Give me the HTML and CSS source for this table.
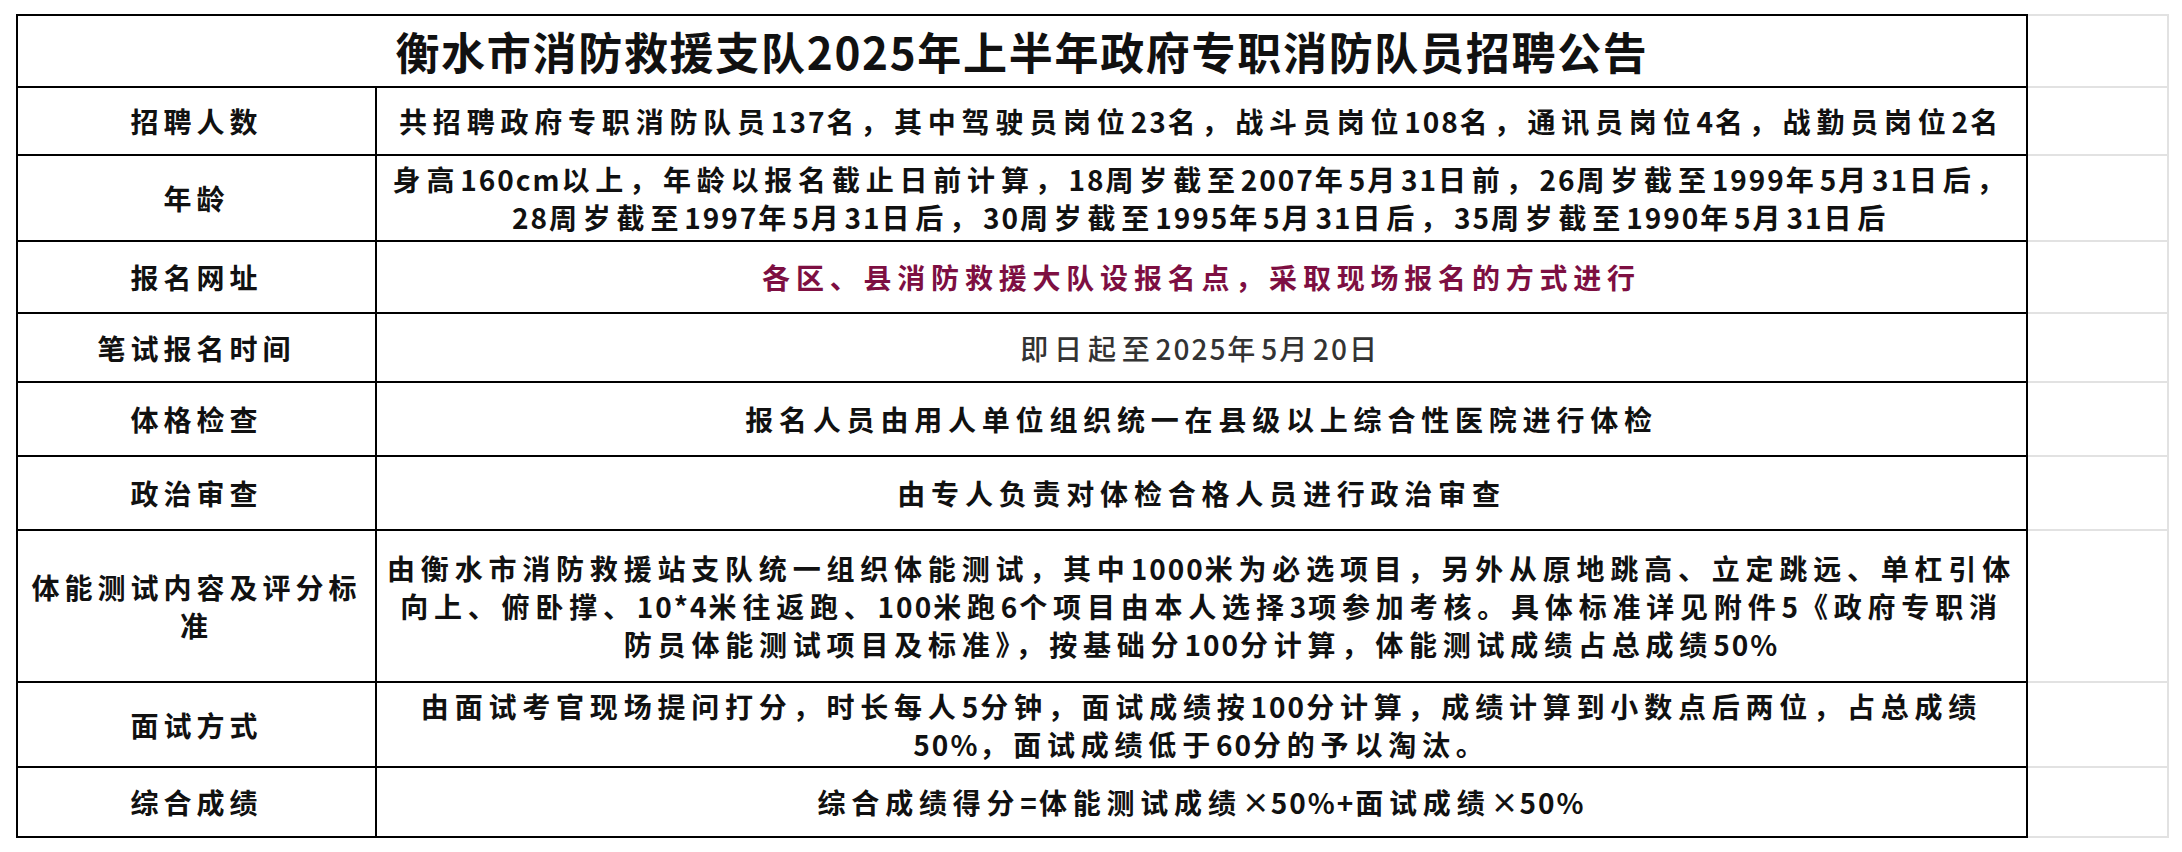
FILE: index.html
```html
<!DOCTYPE html>
<html lang="zh-CN">
<head>
<meta charset="utf-8">
<title>衡水市消防救援支队2025年上半年政府专职消防队员招聘公告</title>
<link rel="stylesheet" href="styles.css">
</head>
<body>
<div class="sheet">
  <div class="grid">
    <div class="cell title"><div class="txt">衡水市消防救援支队2025年上半年政府专职消防队员招聘公告</div></div>
    <div class="ext first"></div>

    <div class="cell label"><div class="txt">招聘人数</div></div>
    <div class="cell content"><div class="txt">共招聘政府专职消防队员<span class="n">137</span>名，其中驾驶员岗位<span class="n">23</span>名，战斗员岗位<span class="n">108</span>名，通讯员岗位<span class="n">4</span>名，战勤员岗位<span class="n">2</span>名</div></div>
    <div class="ext"></div>

    <div class="cell label"><div class="txt">年龄</div></div>
    <div class="cell content"><div class="txt">身高<span class="n">160cm</span>以上，年龄以报名截止日前计算，<span class="n">18</span>周岁截至<span class="n">2007</span>年<span class="n">5</span>月<span class="n">31</span>日前，<span class="n">26</span>周岁截至<span class="n">1999</span>年<span class="n">5</span>月<span class="n">31</span>日后，<br><span class="n">28</span>周岁截至<span class="n">1997</span>年<span class="n">5</span>月<span class="n">31</span>日后，<span class="n">30</span>周岁截至<span class="n">1995</span>年<span class="n">5</span>月<span class="n">31</span>日后，<span class="n">35</span>周岁截至<span class="n">1990</span>年<span class="n">5</span>月<span class="n">31</span>日后</div></div>
    <div class="ext"></div>

    <div class="cell label"><div class="txt">报名网址</div></div>
    <div class="cell content maroon"><div class="txt">各区、县消防救援大队设报名点，采取现场报名的方式进行</div></div>
    <div class="ext"></div>

    <div class="cell label"><div class="txt">笔试报名时间</div></div>
    <div class="cell content muted"><div class="txt">即日起至<span class="n">2025</span>年<span class="n">5</span>月<span class="n">20</span>日</div></div>
    <div class="ext"></div>

    <div class="cell label"><div class="txt">体格检查</div></div>
    <div class="cell content"><div class="txt">报名人员由用人单位组织统一在县级以上综合性医院进行体检</div></div>
    <div class="ext"></div>

    <div class="cell label"><div class="txt">政治审查</div></div>
    <div class="cell content"><div class="txt">由专人负责对体检合格人员进行政治审查</div></div>
    <div class="ext"></div>

    <div class="cell label"><div class="txt">体能测试内容及评分标<br>准</div></div>
    <div class="cell content"><div class="txt">由衡水市消防救援站支队统一组织体能测试，其中<span class="n">1000</span>米为必选项目，另外从原地跳高、立定跳远、单杠引体<br>向上、俯卧撑、<span class="n">10*4</span>米往返跑、<span class="n">100</span>米跑<span class="n">6</span>个项目由本人选择<span class="n">3</span>项参加考核。具体标准详见附件<span class="n">5</span>《政府专职消<br>防员体能测试项目及标准》，按基础分<span class="n">100</span>分计算，体能测试成绩占总成绩<span class="n">50%</span></div></div>
    <div class="ext"></div>

    <div class="cell label"><div class="txt">面试方式</div></div>
    <div class="cell content"><div class="txt">由面试考官现场提问打分，时长每人<span class="n">5</span>分钟，面试成绩按<span class="n">100</span>分计算，成绩计算到小数点后两位，占总成绩<br><span class="n">50%</span>，面试成绩低于<span class="n">60</span>分的予以淘汰。</div></div>
    <div class="ext"></div>

    <div class="cell label"><div class="txt">综合成绩</div></div>
    <div class="cell content"><div class="txt">综合成绩得分<span class="n">=</span>体能测试成绩<span class="x">×</span><span class="n">50%+</span>面试成绩<span class="x">×</span><span class="n">50%</span></div></div>
    <div class="ext"></div>
  </div>
</div>
</body>
</html>
```

FILE: styles.css
```css
* { box-sizing: border-box; }

html, body {
  margin: 0;
  padding: 0;
  background: #ffffff;
}

body {
  font-family: "Noto Sans CJK SC", "Noto Sans", "Liberation Sans", sans-serif;
  color: #111111;
}

.sheet {
  padding: 14px 0 0 16px;
}

.grid {
  display: grid;
  grid-template-columns: 361px 1651px 141px;
  grid-template-rows: 74px 68px 86px 72px 69px 74px 74px 152px 85px 70px;
}

.cell {
  display: flex;
  align-items: center;
  justify-content: center;
  text-align: center;
  border-right: 2px solid #000000;
  border-bottom: 2px solid #000000;
  white-space: nowrap;
  font-weight: 700;
  font-size: 28px;
  letter-spacing: 5.8px;
  line-height: 38px;
}

.txt {
  text-align: center;
}

.n {
  letter-spacing: 2px;
}

.x {
  letter-spacing: 1px;
}

.title {
  grid-column: 1 / span 2;
  border-top: 2px solid #000000;
  border-left: 2px solid #000000;
  font-size: 44px;
  letter-spacing: 1.7px;
  line-height: 50px;
}

.label {
  border-left: 2px solid #000000;
  letter-spacing: 5px;
}

.maroon {
  color: #7d0f42;
}

.muted {
  color: #333333;
  font-weight: 500;
}

.ext {
  border-right: 2px solid #e2e2e2;
  border-bottom: 2px solid #e2e2e2;
}

.ext.first {
  border-top: 2px solid #e2e2e2;
}
```
